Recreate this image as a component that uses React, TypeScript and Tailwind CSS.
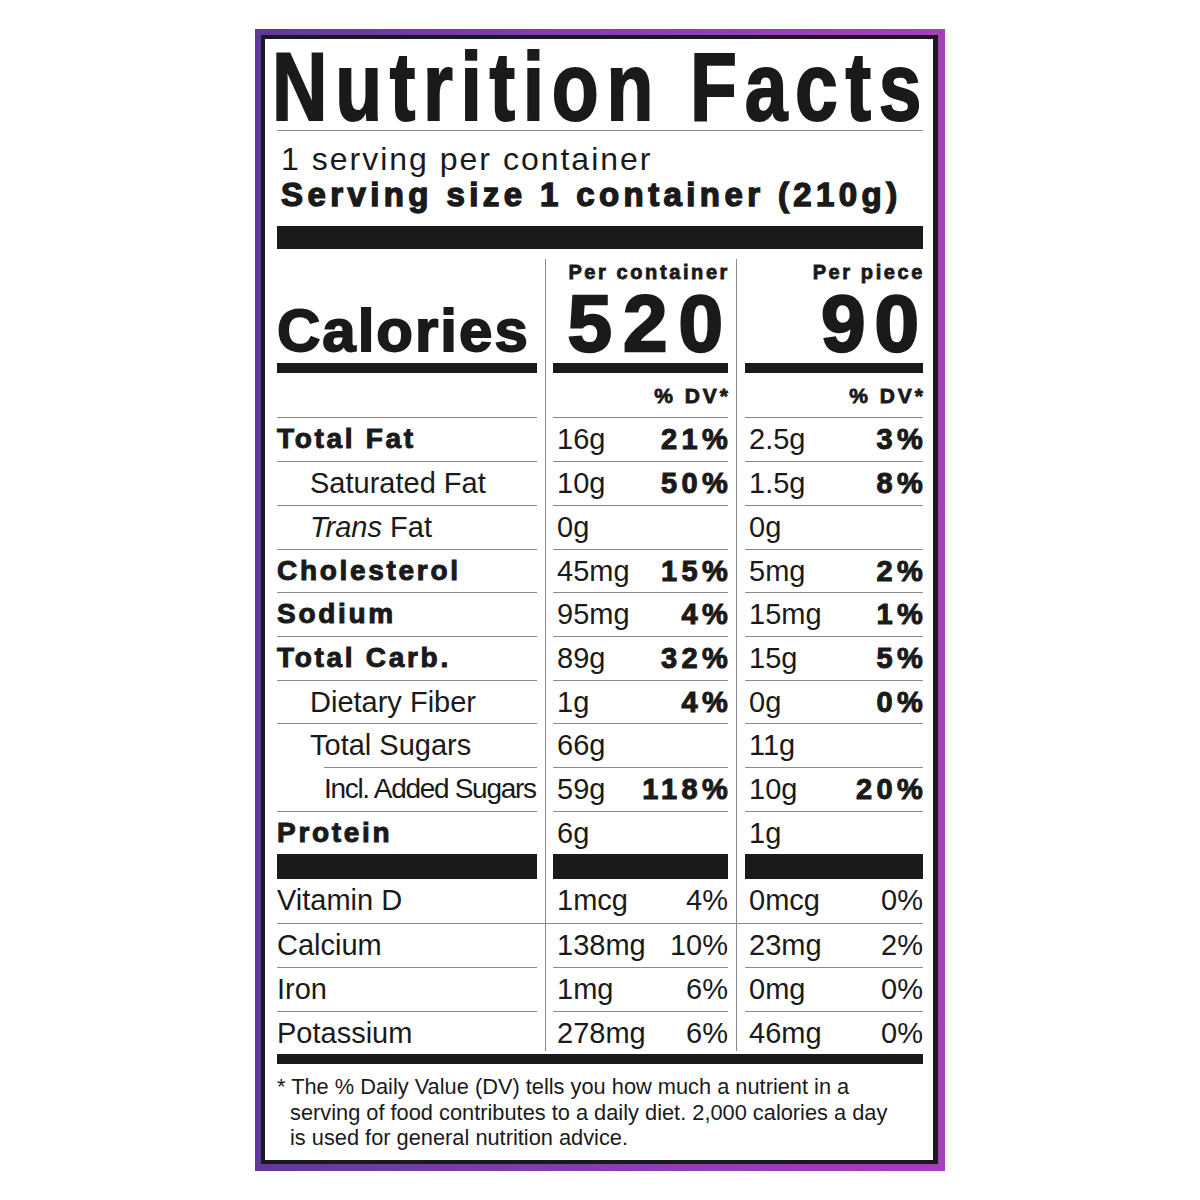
import React from "react";

type Nutrient = {
  label: React.ReactNode;
  kind: "bold" | "sub" | "subsub";
  h: string;
  a: string;
  ap: string;
  b: string;
  bp: string;
  line?: boolean;
  lineIndent?: boolean;
};

const nutrients: Nutrient[] = [
  { label: "Total Fat", kind: "bold", h: "h-[44px]", a: "16g", ap: "21%", b: "2.5g", bp: "3%" },
  { label: "Saturated Fat", kind: "sub", h: "h-[44px]", a: "10g", ap: "50%", b: "1.5g", bp: "8%" },
  {
    label: (
      <>
        <i>Trans</i> Fat
      </>
    ),
    kind: "sub",
    h: "h-[44px]",
    a: "0g",
    ap: "",
    b: "0g",
    bp: "",
  },
  { label: "Cholesterol", kind: "bold", h: "h-[43px]", a: "45mg", ap: "15%", b: "5mg", bp: "2%" },
  { label: "Sodium", kind: "bold", h: "h-[44px]", a: "95mg", ap: "4%", b: "15mg", bp: "1%" },
  { label: "Total Carb.", kind: "bold", h: "h-[44px]", a: "89g", ap: "32%", b: "15g", bp: "5%" },
  { label: "Dietary Fiber", kind: "sub", h: "h-[43px]", a: "1g", ap: "4%", b: "0g", bp: "0%" },
  { label: "Total Sugars", kind: "sub", h: "h-[44px]", a: "66g", ap: "", b: "11g", bp: "", lineIndent: true },
  { label: "Incl. Added Sugars", kind: "subsub", h: "h-[44px]", a: "59g", ap: "118%", b: "10g", bp: "20%" },
  { label: "Protein", kind: "bold", h: "h-[42px]", a: "6g", ap: "", b: "1g", bp: "", line: false },
];

const vitamins = [
  { label: "Vitamin D", h: "h-[45px]", a: "1mcg", ap: "4%", b: "0mcg", bp: "0%", line: true },
  { label: "Calcium", h: "h-[44px]", a: "138mg", ap: "10%", b: "23mg", bp: "2%", line: true },
  { label: "Iron", h: "h-[44px]", a: "1mg", ap: "6%", b: "0mg", bp: "0%", line: true },
  { label: "Potassium", h: "h-[39px]", a: "278mg", ap: "6%", b: "46mg", bp: "0%", line: false },
];

const heavy = "font-bold [-webkit-text-stroke:1px_#1a1a1a]";
const rule = "h-px bg-[#8a8a8a]";

const Row = ({
  h,
  left,
  mid,
  right,
  line = true,
  lineIndent = false,
  full = false,
}: {
  h: string;
  left: React.ReactNode;
  mid: React.ReactNode;
  right: React.ReactNode;
  line?: boolean;
  lineIndent?: boolean;
  full?: boolean;
}) => (
  <div className={`flex ${h}`}>
    <div className="flex w-[268px] flex-col pr-[8px]">
      <div className="flex-1">{left}</div>
      {line && <div className={`${rule} ${lineIndent ? "ml-[47px]" : ""} ${full ? "-mr-[8px]" : ""}`} />}
    </div>
    <div className="flex w-[191px] flex-col border-l border-[#8a8a8a] pl-[7px] pr-[8px]">
      <div className="flex-1">{mid}</div>
      {line && <div className={`${rule} ${full ? "-ml-[7px] -mr-[8px]" : ""}`} />}
    </div>
    <div className="flex w-[187px] flex-col border-l border-[#8a8a8a] pl-[8px]">
      <div className="flex-1">{right}</div>
      {line && <div className={`${rule} ${full ? "-ml-[8px]" : ""}`} />}
    </div>
  </div>
);

const Values = ({ v, p, strong = true }: { v: string; p: string; strong?: boolean }) => (
  <div className="flex justify-between pl-[4px] text-[29px] leading-[42px]">
    <span>{v}</span>
    {p &&
      (strong ? (
        <span className={`${heavy} -mr-[4px] tracking-[4.3px]`}>{p}</span>
      ) : (
        <span>{p}</span>
      ))}
  </div>
);

const Label = ({ n }: { n: Nutrient }) => {
  if (n.kind === "bold")
    return <div className={`${heavy} text-[28px] leading-[42px] tracking-[2.7px]`}>{n.label}</div>;
  if (n.kind === "sub") return <div className="pl-[33px] text-[29px] leading-[42px]">{n.label}</div>;
  return <div className="pl-[47px] text-[28px] leading-[42px] tracking-[-1.3px]">{n.label}</div>;
};

export default function App() {
  return (
    <div className="min-h-[1200px] w-full bg-white pt-[29px] font-['Liberation_Sans',Arial,sans-serif] text-[#1a1a1a]">
      <div className="mx-auto h-[1142px] w-[690px] bg-linear-to-r from-[#5f3a98] via-[#8a3dad] to-[#a540ba] pb-[7px] pl-[6px] pr-[7px] pt-[6px]">
        <div className="h-full border-b-[4px] border-l-[4px] border-r-[5px] border-t-[4px] border-[#1a1a1a] bg-white pl-[12px] pr-[10px]">
          {/* title */}
          <div className="h-[91px]">
            <div className="-ml-[5px] origin-left whitespace-nowrap pt-[4px] text-[96px] font-bold leading-[88px] tracking-[9.6px] [-webkit-text-stroke:2px_#1a1a1a] [transform:scaleX(0.8)]">
              Nutrition Facts
            </div>
          </div>
          <div className={rule} />

          {/* serving */}
          <div className="pl-[4px] pt-[11px]">
            <div className="text-[32px] leading-[35px] tracking-[2px]">1 serving per container</div>
            <div className="text-[33px] font-bold leading-[35px] tracking-[4.4px] [-webkit-text-stroke:1.4px_#1a1a1a]">
              Serving size 1 container (210g)
            </div>
          </div>
          <div className="mt-[14px] h-[23px] bg-[#1a1a1a]" />

          {/* table */}
          <div className="mt-[10px]">
            {/* calories header */}
            <div className="flex h-[159px]">
              <div className="flex w-[268px] flex-col pr-[8px]">
                <div className="h-[42px]" />
                <div className="h-[62px] text-[60px] font-bold leading-[60px] tracking-[2px] [-webkit-text-stroke:1.8px_#1a1a1a]">
                  Calories
                </div>
                <div className="h-[10px] bg-[#1a1a1a]" />
                <div className="h-[44px]" />
                <div className={rule} />
              </div>
              {[
                { w: "w-[191px] pl-[7px] pr-[8px]", head: "Per container", num: "520", track: "tracking-[11px] -mr-[6px]" },
                { w: "w-[187px] pl-[8px]", head: "Per piece", num: "90", track: "tracking-[9px] -mr-[5px]" },
              ].map((c) => (
                <div key={c.num} className={`flex flex-col border-l border-[#8a8a8a] ${c.w}`}>
                  <div className="-mr-[2px] h-[25px] pt-[4px] text-right text-[20px] font-bold leading-[18px] tracking-[2.6px] [-webkit-text-stroke:0.8px_#1a1a1a]">
                    {c.head}
                  </div>
                  <div className={`h-[79px] pt-[8px] text-right text-[80px] font-bold leading-[64px] [-webkit-text-stroke:2.4px_#1a1a1a] ${c.track}`}>
                    {c.num}
                  </div>
                  <div className="h-[10px] bg-[#1a1a1a]" />
                  <div className="-mr-[3px] h-[44px] pt-[11px] text-right text-[21px] font-bold leading-[24px] tracking-[3px] [-webkit-text-stroke:0.8px_#1a1a1a]">
                    % DV*
                  </div>
                  <div className={rule} />
                </div>
              ))}
            </div>

            {nutrients.map((n, i) => (
              <Row
                key={i}
                h={n.h}
                line={n.line !== false}
                lineIndent={n.lineIndent}
                left={<Label n={n} />}
                mid={<Values v={n.a} p={n.ap} />}
                right={<Values v={n.b} p={n.bp} />}
              />
            ))}

            <Row
              h="h-[25px]"
              line={false}
              left={<div className="h-full bg-[#1a1a1a]" />}
              mid={<div className="h-full bg-[#1a1a1a]" />}
              right={<div className="h-full bg-[#1a1a1a]" />}
            />

            {vitamins.map((v, i) => (
              <Row
                key={v.label}
                h={v.h}
                line={v.line}
                full={i === 0}
                left={<div className="text-[29px] leading-[42px]">{v.label}</div>}
                mid={<Values v={v.a} p={v.ap} strong={false} />}
                right={<Values v={v.b} p={v.bp} strong={false} />}
              />
            ))}
          </div>

          <div className="mt-[3px] h-[10px] bg-[#1a1a1a]" />

          {/* footnote */}
          <p className="mt-[10px] pl-[13px] -indent-[13px] text-[21.8px] leading-[25.7px]">
            * The % Daily Value (DV) tells you how much a nutrient in a
            <br />
            serving of food contributes to a daily diet. 2,000 calories a day
            <br />
            is used for general nutrition advice.
          </p>
        </div>
      </div>
    </div>
  );
}
